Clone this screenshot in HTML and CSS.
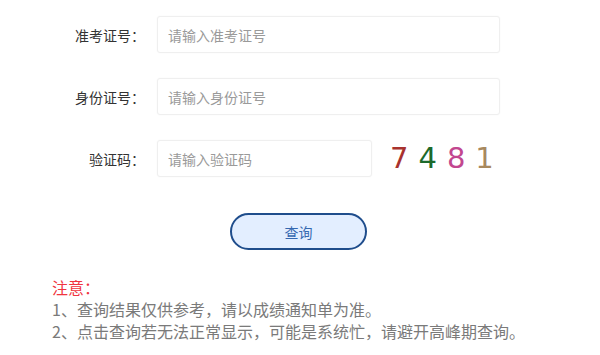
FILE: index.html
```html
<!DOCTYPE html>
<html lang="zh-CN">
<head>
<meta charset="utf-8">
<link rel="stylesheet" href="styles.css">
</head>
<body>
<div class="form">
  <div class="row">
    <label class="label">准考证号：</label>
    <input class="input" type="text" placeholder="请输入准考证号">
  </div>
  <div class="row">
    <label class="label">身份证号：</label>
    <input class="input" type="text" placeholder="请输入身份证号">
  </div>
  <div class="row">
    <label class="label">验证码：</label>
    <input class="input input-short" type="text" placeholder="请输入验证码">
    <div class="captcha">
      <span class="d1">7</span><span class="d2">4</span><span class="d3">8</span><span class="d4">1</span>
    </div>
  </div>
  <div class="actions">
    <button class="btn" type="button">查询</button>
  </div>
  <div class="notes">
    <div class="notes-title">注意：</div>
    <div>1、查询结果仅供参考，请以成绩通知单为准。</div>
    <div>2、点击查询若无法正常显示，可能是系统忙，请避开高峰期查询。</div>
  </div>
</div>
</body>
</html>
```

FILE: styles.css
```css
html, body {
  margin: 0;
  padding: 0;
  background: #fff;
}
body {
  font-family: "Noto Sans CJK SC", "Noto Sans", sans-serif;
  color: #333;
}
.form {
  padding-top: 16px;
}
.row {
  display: flex;
  align-items: center;
  height: 37px;
  margin-bottom: 25px;
}
.label {
  width: 145px;
  text-align: right;
  font-size: 14px;
  color: #333;
}
.input {
  box-sizing: border-box;
  margin-left: 12px;
  width: 343px;
  height: 37px;
  border: 1px solid #efefef;
  border-radius: 3px;
  padding: 0 10px;
  font-family: "Noto Sans CJK SC", "Noto Sans", sans-serif;
  font-size: 14px;
  color: #333;
  outline: none;
  box-shadow: 0 0 2px rgba(0,0,0,0.04);
}
.input::placeholder {
  color: #9a9a9a;
}
.input-short {
  width: 215px;
}
.captcha {
  display: flex;
  gap: 10px;
  margin-left: 18px;
  font-family: "DejaVu Sans", sans-serif;
  font-size: 29px;
  line-height: 1;
}
.d1 { color: #a8322e; }
.d2 { color: #1c6a2b; }
.d3 { color: #c2478f; }
.d4 { color: #a8895f; }
.actions {
  margin-top: 36px;
  padding-left: 230px;
}
.btn {
  box-sizing: border-box;
  width: 137px;
  height: 37px;
  border: 2px solid #1f4d8c;
  border-radius: 19px;
  background: #e3eeff;
  color: #3568b0;
  font-family: "Noto Sans CJK SC", "Noto Sans", sans-serif;
  font-size: 14px;
  cursor: pointer;
}
.notes {
  margin-top: 26px;
  padding-left: 52px;
  font-size: 16px;
  line-height: 22px;
  color: #7a7a7a;
}
.notes-title {
  color: #f0353f;
}
```
